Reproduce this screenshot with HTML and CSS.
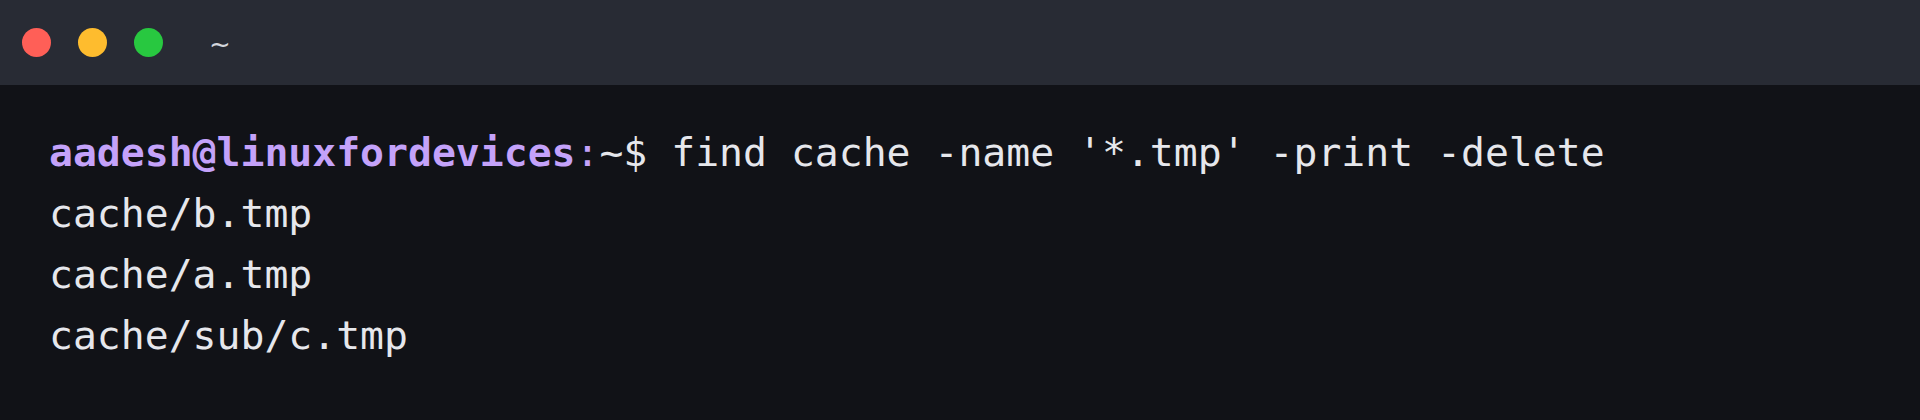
FILE: index.html
```html
<!DOCTYPE html>
<html>
<head>
<meta charset="utf-8">
<link rel="stylesheet" href="styles.css">
</head>
<body>
<div class="window">
  <div class="titlebar">
    <div class="lights">
      <span class="light red"></span>
      <span class="light yellow"></span>
      <span class="light green"></span>
    </div>
    <span class="title">~</span>
  </div>
  <div class="term">
    <div class="line"><span class="prompt">aadesh@linuxfordevices</span><span class="colon">:</span>~$ find cache -name '*.tmp' -print -delete</div>
    <div class="line">cache/b.tmp</div>
    <div class="line">cache/a.tmp</div>
    <div class="line">cache/sub/c.tmp</div>
  </div>
</div>
</body>
</html>
```
FILE: styles.css
```css
html, body {
  margin: 0;
  padding: 0;
  background: #111217;
}
.window {
  width: 1920px;
  height: 420px;
  background: #111217;
  display: flex;
  flex-direction: column;
  overflow: hidden;
}
.titlebar {
  height: 85px;
  flex-shrink: 0;
  background: #282b34;
  display: flex;
  align-items: center;
  padding-left: 22px;
  box-sizing: border-box;
}
.lights {
  display: flex;
  gap: 27px;
}
.light {
  width: 29px;
  height: 29px;
  border-radius: 50%;
  display: block;
}
.red { background: #ff5f57; }
.yellow { background: #febc2e; }
.green { background: #28c840; }
.title {
  margin-left: 46px;
  font-family: "DejaVu Sans", sans-serif;
  font-size: 26px;
  color: #d4d6dc;
  line-height: 1;
  padding-top: 2px;
}
.term {
  padding: 37px 0 0 49px;
  font-family: "DejaVu Sans Mono", monospace;
  font-size: 39.75px;
  line-height: 61px;
  color: #e6e7ec;
}
.line {
  white-space: pre;
}
.prompt {
  color: #c4a2fa;
  font-weight: bold;
}
.colon {
  color: #c4a2fa;
}
```
